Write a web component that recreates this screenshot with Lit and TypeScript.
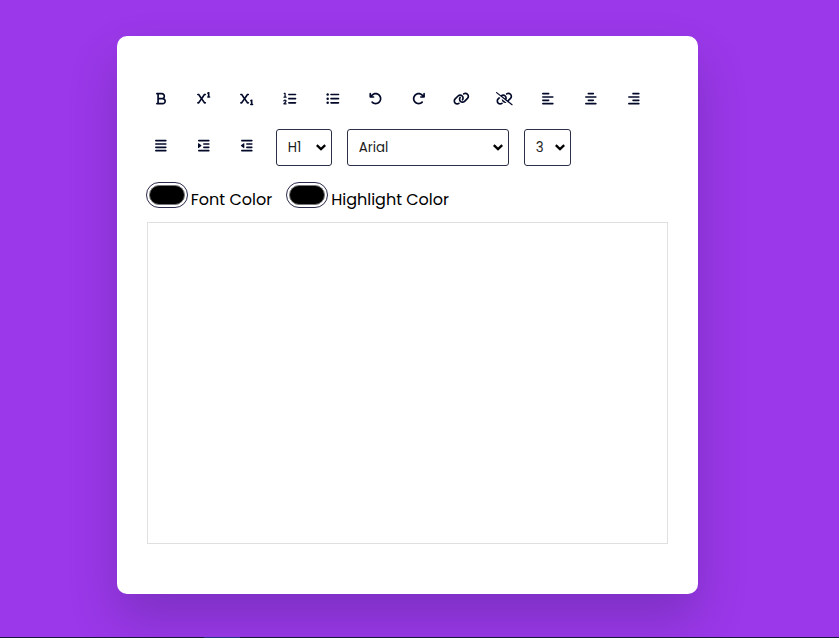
import { LitElement, html, css, svg } from "lit";
import { customElement } from "lit/decorators.js";

const line = (x1: number, x2: number, y: number) =>
  svg`<line x1=${x1} x2=${x2} y1=${y} y2=${y} stroke="currentColor" stroke-width="62" stroke-linecap="round"/>`;

const X_SHAPE =
  "M32 64C14.3 64 0 78.3 0 96s14.3 32 32 32l15.3 0 89.6 128L47.3 384 32 384c-17.7 0-32 14.3-32 32s14.3 32 32 32l32 0c10.4 0 20.2-5.1 26.2-13.6L176 311.8l85.8 122.6c6 8.6 15.8 13.6 26.2 13.6l32 0c17.7 0 32-14.3 32-32s-14.3-32-32-32l-15.3 0L215.1 256l89.6-128 15.3 0c17.7 0 32-14.3 32-32s-14.3-32-32-32l-32 0c-10.4 0-20.2 5.1-26.2 13.6L176 200.2 90.2 77.6C84.2 69.1 74.4 64 64 64L32 64z";
const ONE_SHAPE =
  "M480 32c0-11.1-5.7-21.4-15.2-27.2s-21.2-6.4-31.1-1.4l-32 16c-15.8 7.9-22.2 27.1-14.3 42.9C393 73.5 404.3 80.2 416 80.2l0 79.8c-17.7 0-32 14.3-32 32s14.3 32 32 32l64 0c17.7 0 32-14.3 32-32s-14.3-32-32-32l0-128z";
const UNDO =
  "M125.7 160H176c17.7 0 32 14.3 32 32s-14.3 32-32 32H48c-17.7 0-32-14.3-32-32V64c0-17.7 14.3-32 32-32s32 14.3 32 32v51.2L97.6 97.6c87.5-87.5 229.3-87.5 316.8 0s87.5 229.3 0 316.8s-229.3 87.5-316.8 0c-12.5-12.5-12.5-32.8 0-45.3s32.8-12.5 45.3 0c62.5 62.5 163.8 62.5 226.3 0s62.5-163.8 0-226.3s-163.8-62.5-226.3 0L125.7 160z";

const ICONS: { name: string; w: number; lower?: boolean; art: unknown }[] = [
  { name: "Bold", w: 384, art: svg`<path fill-rule="evenodd" d="M0 64C0 46.3 14.3 32 32 32H80 96 224c70.7 0 128 57.3 128 128c0 31.3-11.3 60.1-30 82.3c37.1 22.4 62 63.1 62 109.7c0 70.7-57.3 128-128 128H96 80 32c-17.7 0-32-14.3-32-32s14.3-32 32-32H48V256 96H32C14.3 96 0 81.7 0 64zM224 224c35.3 0 64-28.7 64-64s-28.7-64-64-64H112V224H224zM112 288V416H256c35.3 0 64-28.7 64-64s-28.7-64-64-64H224 112z"/>` },
  { name: "Superscript", w: 512, art: svg`<path d=${X_SHAPE}/><path d=${ONE_SHAPE}/>` },
  { name: "Subscript", w: 512, art: svg`<path d=${X_SHAPE}/><path transform="translate(0 288)" d=${ONE_SHAPE}/>` },
  { name: "Ordered list", w: 512, art: svg`<path d="M24 56c0-13.3 10.7-24 24-24H80c13.3 0 24 10.7 24 24V176h16c13.3 0 24 10.7 24 24s-10.7 24-24 24H40c-13.3 0-24-10.7-24-24s10.7-24 24-24H56V80H48C34.7 80 24 69.3 24 56zM86.7 341.2c-6.5-7.4-18.3-6.9-24 1.2L51.5 357.9c-7.7 10.8-22.7 13.3-33.5 5.6s-13.3-22.7-5.6-33.5l11.1-15.6c23.7-33.2 72.3-35.6 99.2-4.9c21.3 24.4 20.8 60.9-1.1 84.7L86.8 432H120c13.3 0 24 10.7 24 24s-10.7 24-24 24H32c-9.5 0-18.2-5.6-22-14.4s-2.1-18.9 4.3-25.9l72-78c5.3-5.8 5.4-14.6 .3-20.5z"/>${line(224, 480, 96)}${line(224, 480, 256)}${line(224, 480, 416)}` },
  { name: "Bullet list", w: 512, art: svg`<circle cx="64" cy="96" r="48"/><circle cx="64" cy="256" r="48"/><circle cx="64" cy="416" r="48"/>${line(192, 480, 96)}${line(192, 480, 256)}${line(192, 480, 416)}` },
  { name: "Undo", w: 512, art: svg`<path d=${UNDO}/>` },
  { name: "Redo", w: 512, art: svg`<path transform="translate(512 0) scale(-1 1)" d=${UNDO}/>` },
  { name: "Link", w: 640, art: svg`<path d="M579.8 267.7c56.5-56.5 56.5-148 0-204.5c-50-50-128.8-56.5-186.3-15.4l-1.6 1.1c-14.4 10.3-17.7 30.3-7.4 44.6s30.3 17.7 44.6 7.4l1.6-1.1c32.1-22.9 76-19.3 103.8 8.6c31.5 31.5 31.5 82.5 0 114L422.3 334.8c-31.5 31.5-82.5 31.5-114 0c-27.9-27.9-31.5-71.8-8.6-103.8l1.1-1.6c10.3-14.4 6.9-34.4-7.4-44.6s-34.4-6.9-44.6 7.4l-1.1 1.6C206.5 251.2 213 330 263 380c56.5 56.5 148 56.5 204.5 0L579.8 267.7zM60.2 244.3c-56.5 56.5-56.5 148 0 204.5c50 50 128.8 56.5 186.3 15.4l1.6-1.1c14.4-10.3 17.7-30.3 7.4-44.6s-30.3-17.7-44.6-7.4l-1.6 1.1c-32.1 22.9-76 19.3-103.8-8.6C74 372 74 321 105.5 289.5L217.7 177.2c31.5-31.5 82.5-31.5 114 0c27.9 27.9 31.5 71.8 8.6 103.9l-1.1 1.6c-10.3 14.4-6.9 34.4 7.4 44.6s34.4 6.9 44.6-7.4l1.1-1.6C433.5 260.8 427 182 377 132c-56.5-56.5-148-56.5-204.5 0L60.2 244.3z"/>` },
  { name: "Unlink", w: 640, art: svg`<path d="M38.8 5.1C28.4-3.1 13.3-1.2 5.1 9.2S-1.2 34.7 9.2 42.9l592 464c10.4 8.2 25.5 6.3 33.7-4.1s6.3-25.5-4.1-33.7L489.3 358.2l90.5-90.5c56.5-56.5 56.5-148 0-204.5c-50-50-128.8-56.5-186.3-15.4l-1.6 1.1c-14.4 10.3-17.7 30.3-7.4 44.6s30.3 17.7 44.6 7.4l1.6-1.1c32.1-22.9 76-19.3 103.8 8.6c31.5 31.5 31.5 82.5 0 114l-96 96-31.9-25C430.9 239.6 420.1 175.1 377 132c-52.2-52.3-134.5-56.2-191.3-11.7L38.8 5.1zM239 162c30.1-14.9 67.7-9.9 92.8 15.3c20 20 27.5 48.3 21.7 74.5L239 162zM406.6 416.4L220.9 270c-2.1 39.8 12.2 80.1 42.2 110c38.9 38.9 94.4 51 143.6 36.3zm-290-228.5L60.2 244.3c-56.5 56.5-56.5 148 0 204.5c50 50 128.8 56.5 186.3 15.4l1.6-1.1c14.4-10.3 17.7-30.3 7.4-44.6s-30.3-17.7-44.6-7.4l-1.6 1.1c-32.1 22.9-76 19.3-103.8-8.6C74 372 74 321 105.5 289.5l61.8-61.8-50.6-39.9z"/>` },
  { name: "Align left", w: 448, art: svg`${line(32, 256, 64)}${line(32, 416, 192)}${line(32, 256, 320)}${line(32, 416, 448)}` },
  { name: "Align center", w: 448, art: svg`${line(128, 320, 64)}${line(32, 416, 192)}${line(128, 320, 320)}${line(32, 416, 448)}` },
  { name: "Align right", w: 448, art: svg`${line(192, 416, 64)}${line(32, 416, 192)}${line(192, 416, 320)}${line(32, 416, 448)}` },
  { name: "Justify", w: 448, lower: true, art: svg`${line(32, 416, 64)}${line(32, 416, 192)}${line(32, 416, 320)}${line(32, 416, 448)}` },
  { name: "Indent", w: 448, lower: true, art: svg`${line(32, 416, 64)}${line(224, 416, 192)}${line(224, 416, 320)}${line(32, 416, 448)}<path d="M127.8 268.6L25.8 347.9C15.3 356.1 0 348.6 0 335.3V176.7c0-13.3 15.3-20.8 25.8-12.6l101.9 79.3c8.2 6.4 8.2 18.9 0 25.3z"/>` },
  { name: "Outdent", w: 448, lower: true, art: svg`${line(32, 416, 64)}${line(224, 416, 192)}${line(224, 416, 320)}${line(32, 416, 448)}<path d="M.2 268.6c-8.2-6.4-8.2-18.9 0-25.3l101.9-79.3c10.5-8.2 25.8-.6 25.8 12.6V335.3c0 13.3-15.3 20.8-25.8 12.6L.2 268.6z"/>` },
];

const SELECTS = [
  { cls: "heading", label: "Heading", value: "H1" },
  { cls: "family", label: "Font", value: "Arial" },
  { cls: "size", label: "Size", value: "3" },
];

@customElement("app-root")
export class AppRoot extends LitElement {
  static styles = css`
    :host {
      display: flex;
      flex-direction: column;
      height: 100vh;
      overflow: hidden;
      background: #9b38ea;
      font-family: Poppins, Inter, sans-serif;
      color: #000;
    }
    * { box-sizing: border-box; }
    .stage { flex: 1; padding: 36px 0 0 116.75px; min-height: 0; }
    .card {
      width: 581px;
      height: 557.75px;
      padding: 49px 30px 50px;
      background: #fff;
      border-radius: 10px;
      box-shadow: 0 25px 50px rgba(7, 20, 35, 0.2);
    }
    .options { display: flex; flex-wrap: wrap; align-items: center; gap: 16px 15px; }
    .tool {
      display: grid;
      place-items: center;
      width: 28px;
      height: 28px;
      padding: 0;
      border: 0;
      background: #fff;
      color: #020929;
    }
    .lower { margin-bottom: 3px; }
    .tool svg { display: block; height: 13.33px; fill: currentColor; overflow: visible; }
    .picker { display: grid; align-items: center; height: 37px; }
    .picker select, .picker .arrow { grid-area: 1 / 1; }
    .arrow { justify-self: end; width: 10px; height: 7px; margin-right: 6px; pointer-events: none; }
    select {
      appearance: none;
      width: 100%;
      height: 37px;
      padding: 0 11px;
      border: 1px solid #2b3049;
      border-radius: 3px;
      background: #fff;
      color: #1c1c1c;
      font: 400 13.33px Poppins, Inter, sans-serif;
    }
    .heading { width: 56px; }
    .family { width: 162px; }
    .size { width: 47px; }
    .colors { display: flex; gap: 14px; margin-top: 16px; height: 40px; margin-left: -1px; }
    .color { display: flex; gap: 3px; font-size: 16px; line-height: 24px; white-space: nowrap; }
    .swatch {
      width: 42px;
      height: 26px;
      padding: 2px;
      border: 1px solid #2b2c4c;
      border-radius: 13px;
      background: #fff;
    }
    .fill { display: block; height: 20px; border: 1px solid #777; border-radius: 10px; background: #000; }
    .caption { padding-top: 6px; }
    .editor { height: 322px; border: 1px solid #e0e0e0; outline: none; }
    .edge { flex: none; height: 1px; background: linear-gradient(90deg, #17163c 204px, #253580 204px 240px, #17163c 240px); }
  `;

  render() {
    return html`
      <div class="stage">
        <div class="card">
          <div class="options">
            ${ICONS.map(
              (i) => html`<button class="tool ${i.lower ? "lower" : ""}" aria-label=${i.name}>
                <svg viewBox="0 0 ${i.w} 512" width=${(i.w / 512) * 13.33} height="13.33">${i.art}</svg>
              </button>`
            )}
            ${SELECTS.map(
              (s) => html`<div class="picker ${s.cls}">
                <select aria-label=${s.label}><option>${s.value}</option></select>
                <svg class="arrow" viewBox="0 0 10 7"><path d="M.8 1.2 5 5.2 9.2 1.2" fill="none" stroke="#000" stroke-width="2.3"/></svg>
              </div>`
            )}
          </div>
          <div class="colors">
            ${["Font Color", "Highlight Color"].map(
              (label) => html`<div class="color">
                <span class="swatch"><span class="fill"></span></span><span class="caption">${label}</span>
              </div>`
            )}
          </div>
          <div class="editor" contenteditable="true"></div>
        </div>
      </div>
      <div class="edge"></div>
    `;
  }
}
